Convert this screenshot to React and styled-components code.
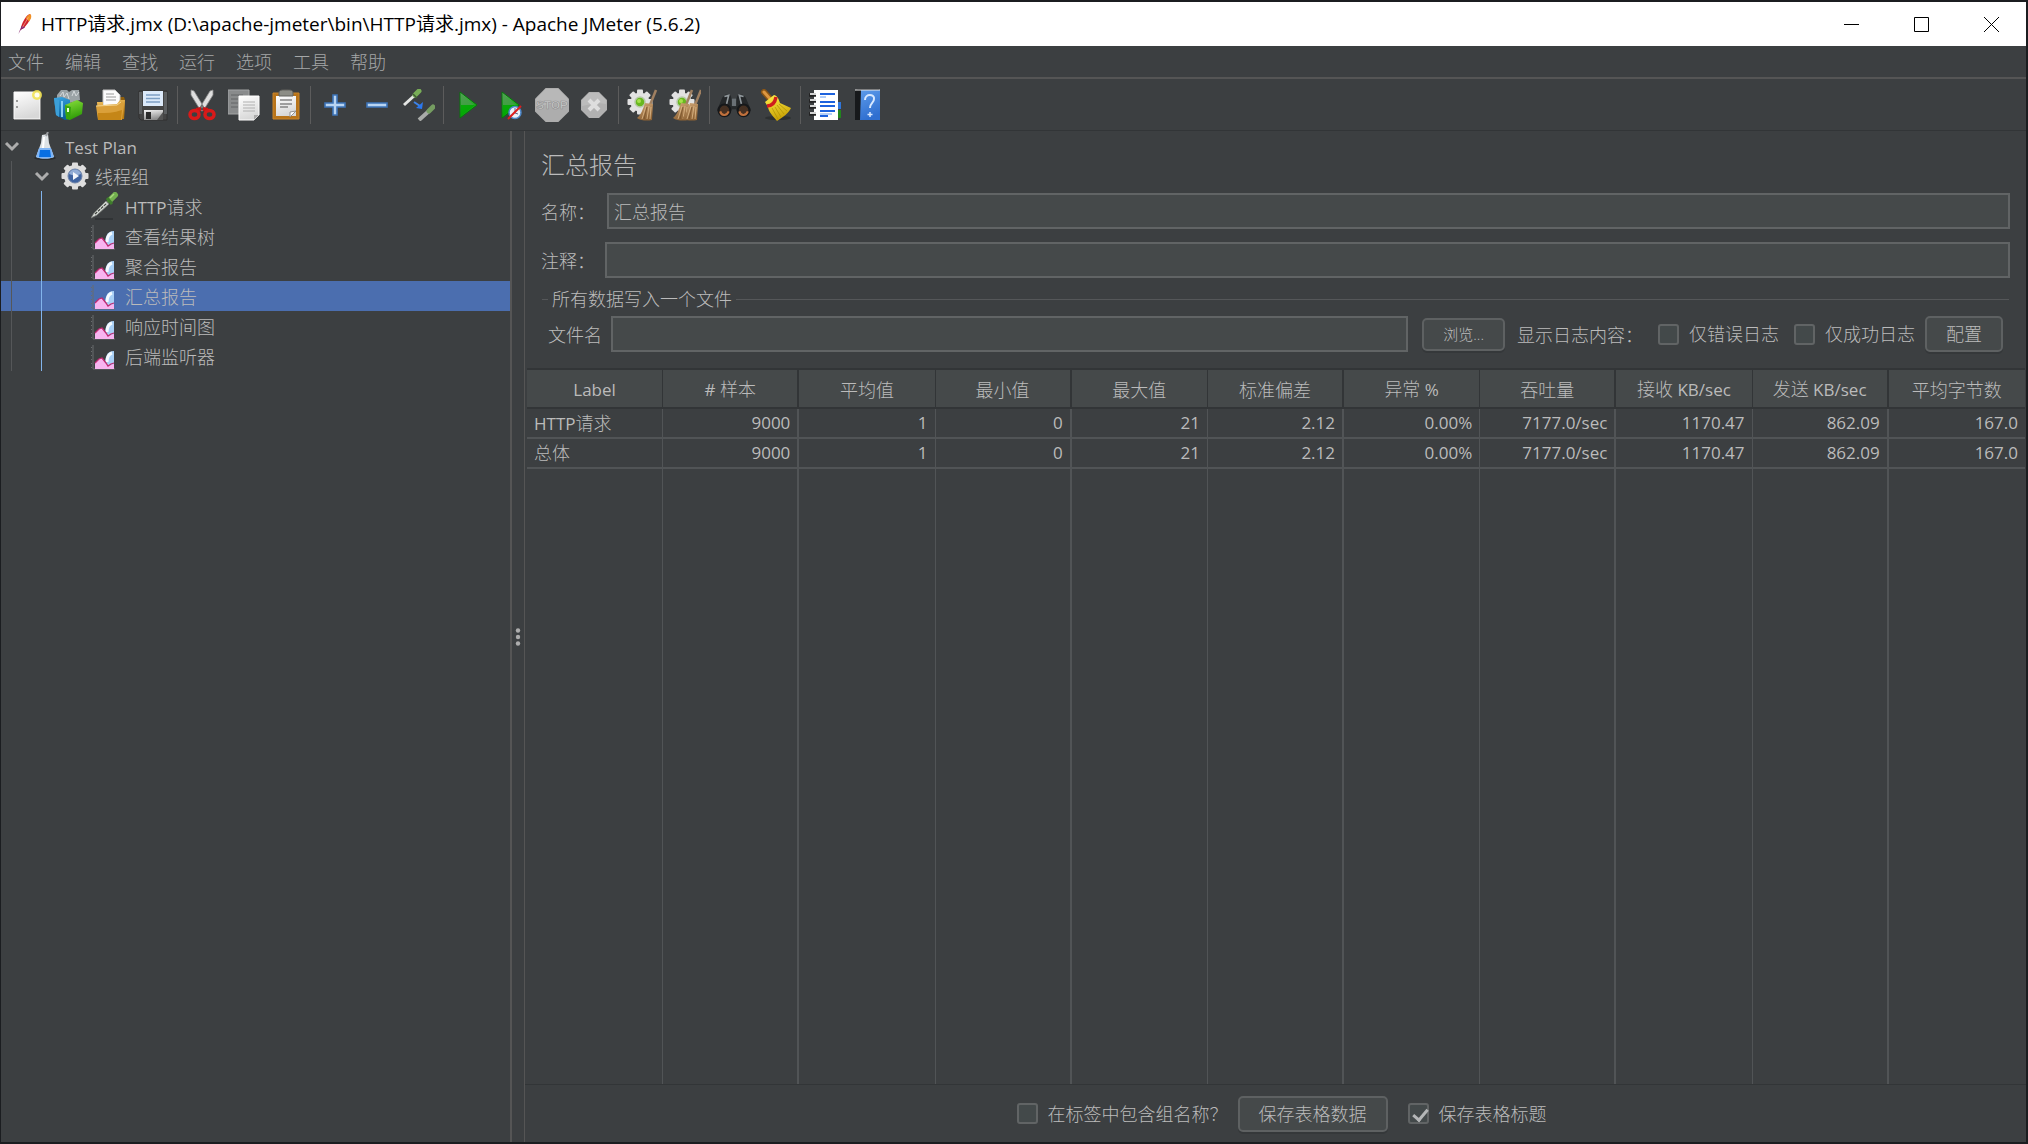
import { Fragment, useState } from 'react';
import styled, { createGlobalStyle } from 'styled-components';

const GlobalStyle = createGlobalStyle`
  * {
    box-sizing: border-box;
  }

  body {
    margin: 0;
    background-color: #1b1d20;
    color: #bbb;
    font-family: 'Open Sans', 'Noto Sans CJK SC', sans-serif;
    font-size: 18px;
    font-weight: 300;
    line-height: 24px;
  }

  button,
  input {
    font: inherit;
    color: inherit;
  }
`;

const StWindow = styled.div`
  height: 100vh;
  padding: 2px 2px 2px 1px;
  display: flex;
  flex-direction: column;
`;

const StTitleBar = styled.header`
  flex: 0 0 44px;
  padding-left: 14px;
  display: flex;
  align-items: center;
  gap: 6px;
  background-color: #fff;
  color: #000;
`;

const StTitle = styled.h1`
  flex: 1;
  margin: 0;
  font-size: 19px;
  font-weight: 400;
  white-space: nowrap;
`;

const StWindowButtons = styled.div`
  display: flex;
`;

const StWindowButton = styled.button`
  width: 70px;
  height: 44px;
  padding: 0;
  border: 0;
  background: none;
  display: flex;
  align-items: center;
  justify-content: center;
`;

const StMenuBar = styled.nav`
  flex: 0 0 33px;
  padding-left: 7px;
  display: flex;
  align-items: center;
  gap: 21px;
  border-bottom: 2px solid #555;
  background-color: #3c3f41;
`;

const StMenuButton = styled.button`
  padding: 0;
  border: 0;
  background: none;
  color: #a5a7a8;
`;

const StToolbar = styled.div`
  flex: 0 0 52px;
  padding-left: 5px;
  display: flex;
  align-items: center;
  border-bottom: 1px solid #323537;
  background-color: #3c3f41;
`;

const StToolButton = styled.button`
  width: 42px;
  height: 42px;
  padding: 0;
  border: 0;
  background: none;
  display: flex;
  align-items: center;
  justify-content: center;
`;

const StToolSeparator = styled.div`
  width: 7px;
  height: 38px;
  display: flex;
  justify-content: center;

  &::before {
    content: '';
    width: 1px;
    background-color: #5c5c5c;
  }
`;

const StBody = styled.main`
  flex: 1;
  min-height: 0;
  display: flex;
  background-color: #3c3f41;
`;

const StTree = styled.ul`
  flex: 0 0 509px;
  margin: 0;
  padding: 0;
  list-style: none;
`;

const StTreeRow = styled.li`
  height: 30px;
  display: flex;
  align-items: center;
  gap: 6px;
  background-color: ${({ $selected }) => ($selected ? '#4b6eaf' : 'transparent')};
  white-space: nowrap;
`;

const StTreeIndent = styled.span`
  margin-right: -6px;
  display: flex;
`;

const StTreeCell = styled.span`
  width: 30px;
  height: 30px;
  padding-left: 3px;
  display: flex;
  align-items: center;
`;

const StTreeGuide = styled.span`
  width: 30px;
  height: 30px;
  padding-left: 10px;

  &::before {
    content: '';
    display: block;
    width: 1px;
    height: 30px;
    background-color: ${({ $active }) => ($active ? '#82b4ec' : '#555759')};
  }
`;

const StTreeText = styled.span`
  padding-top: 2px;
`;

const StSplitter = styled.div`
  flex: 0 0 15px;
  border-left: 2px solid #555;
  border-right: 1px solid #555;
  display: flex;
  align-items: center;
  justify-content: center;
`;

const StPanel = styled.section`
  flex: 1;
  min-width: 0;
  padding-top: 16px;
  display: flex;
  flex-direction: column;
`;

const StPanelTitle = styled.h2`
  margin: 0 0 10px;
  padding: 0 16px;
  font-size: 24px;
  font-weight: 300;
  line-height: 36px;
`;

const StField = styled.div`
  margin-bottom: ${({ $last }) => ($last ? '10px' : '13px')};
  padding: 0 16px;
  display: flex;
  align-items: center;
`;

const StLabel = styled.label`
  flex: 0 0 auto;
  width: ${({ $width }) => $width || 'auto'};
  padding-top: 2px;
  white-space: nowrap;
`;

const StInput = styled.input`
  flex: 1;
  min-width: 0;
  height: 36px;
  padding: 0 5px;
  border: 2px solid #616465;
  border-radius: 0;
  background-color: #45494a;
  outline: none;
`;

const StFieldset = styled.fieldset`
  min-width: 0;
  margin: 0 17px 16px;
  padding: 6px 6px 0;
  border: 0 solid #555759;
  border-top-width: 1px;
`;

const StLegend = styled.legend`
  padding: 0 4px;
  line-height: 22px;
`;

const StFileRow = styled.div`
  display: flex;
  align-items: center;
`;

const StButton = styled.button`
  height: ${({ $small }) => ($small ? '33px' : '36px')};
  padding: 0 19px;
  border: 2px solid #5e6162;
  border-radius: 5px;
  background-color: #45494a;
  box-shadow: 0 2px 0 #35383a;
  font-size: ${({ $small }) => ($small ? '15px' : '18px')};
  line-height: 28px;
  white-space: nowrap;
`;

const StBrowse = styled.div`
  margin: 0 12px 0 14px;
`;

const StCheck = styled.label`
  margin-right: ${({ $gap }) => $gap || '0'};
  display: flex;
  align-items: center;
  gap: 10px;
  white-space: nowrap;
`;

const StCheckbox = styled.input`
  appearance: none;
  position: relative;
  width: 21px;
  height: 21px;
  margin: 0;
  border: 2px solid #616465;
  border-radius: 3px;
  background-color: #43494a;

  &:checked::after {
    content: '';
    position: absolute;
    left: 6px;
    top: 1px;
    width: 6px;
    height: 12px;
    border: solid #b4b6b7;
    border-width: 0 3px 3px 0;
    transform: rotate(40deg);
  }
`;

const StTableArea = styled.div`
  flex: 1;
  min-height: 0;
  padding: 0 1px 0 2px;
  border-bottom: 1px solid #323537;
`;

const StTable = styled.table`
  width: 100%;
  height: 100%;
  table-layout: fixed;
  border-collapse: separate;
  border-spacing: 0;

  th,
  td {
    padding: 0 7px;
    border: 0 solid #515456;
    border-right-width: 1px;
    white-space: nowrap;
  }

  th:nth-child(even),
  td:nth-child(even) {
    border-right-width: 2px;
  }

  th:last-child,
  td:last-child {
    border-right-width: 0;
  }

  th {
    height: 41px;
    padding-top: 2px;
    border-color: #323537;
    border-top-width: 2px;
    border-bottom-width: 2px;
    background-color: #45494a;
    font-weight: 300;
  }
`;

const StDataRow = styled.tr`
  height: 30px;

  td {
    height: 30px;
    border-bottom-width: 2px;
    font-size: 17px;
    font-weight: 400;
    text-align: right;
  }

  td:first-child {
    font-size: 18px;
    font-weight: 300;
    text-align: left;
  }
`;

const StLatin = styled.span`
  font-size: 17px;
  font-weight: 400;
`;

const StFooter = styled.footer`
  flex: 0 0 57px;
  padding-left: 12px;
  display: flex;
  align-items: center;
  justify-content: center;

  > button {
    margin-right: 20px;
  }
`;

const StDefs = styled.svg`
  position: absolute;
  width: 0;
  height: 0;
`;

function Svg({ size = 32, box = 32, children }) {
  return (
    <svg width={size} height={size} viewBox={`0 0 ${box} ${box}`} fill="none" aria-hidden="true">
      {children}
    </svg>
  );
}

const gradients = {
  gPaper: ['#ffffff', '#d8d8d8'],
  gFolder: ['#f0c060', '#b87a10'],
  gGreen: ['#8be03c', '#2f9c08'],
  gBlue: ['#3aa7e4', '#0b5f9e'],
  gPlay: ['#5fae62', '#00a800'],
  gSteel: ['#f4f4f4', '#8d8d8d'],
  gBook: ['#5d9bea', '#2f6fd0'],
  gStraw: ['#d2a878', '#8d6234'],
  gBrush: ['#fff04a', '#c9a205'],
};

function Gradients() {
  return (
    <StDefs aria-hidden="true">
      <defs>
        {Object.entries(gradients).map(([id, [from, to]]) => (
          <linearGradient key={id} id={id} x1="0" y1="0" x2="0.3" y2="1">
            <stop offset="0" stopColor={from} />
            <stop offset="1" stopColor={to} />
          </linearGradient>
        ))}
      </defs>
    </StDefs>
  );
}

// eight-toothed wheel, drawn round the origin
const GearShape = ({ tooth, body, fill }) => (
  <g fill={fill}>
    {[0, 45, 90, 135].map((angle) => (
      <rect key={angle} x="-3" y={-tooth} width="6" height={tooth * 2} rx="1" transform={`rotate(${angle})`} />
    ))}
    <circle r={body} />
  </g>
);

const FeatherIcon = () => (
  <Svg size={20} box={24}>
    <path d="M18 0c3 3-2 11-5 14-2 3-4 3-6 5 0-4 2-9 4-12 2-4 4-6 7-7Z" fill="#d0232c" />
    <path d="M18 0c3 2 1 6-1 9l-4-4c1-2 3-4 5-5Z" fill="#f19122" />
    <path d="m8 14 4 2c-2 2-4 2-5 3l-3 5 2-5Z" fill="#86256f" />
    <path d="m16 4-7 12" stroke="#f7b7a0" strokeWidth="0.8" />
  </Svg>
);

const NewIcon = () => (
  <Svg>
    <path d="M3 3h26v27H3Z" fill="url(#gPaper)" stroke="#fafafa" />
    <path d="M3 30.500h26.500V8" stroke="#8e8e8e" />
    <path d="M5 12h2M5 18h2" stroke="#999" strokeWidth="2" />
    <circle cx="26" cy="6" r="5" fill="#f2e34f" opacity="0.85" />
    <circle cx="26" cy="6" r="2.500" fill="#fffef0" />
  </Svg>
);

const TemplatesIcon = () => (
  <Svg>
    <path d="m4 6 4-5h6l2 2 3-2h7l1 10-14 4L4 9Z" fill="#9ba3a6" />
    <path d="m7 7 3-4 1 5 3-4 2 6M19 7l2-5 2 5 3-4" stroke="#d4d9db" />
    <path d="m1 9 8-1 8 3v19l-5 1-9-5Z" fill="url(#gBlue)" />
    <path d="m1 9 5 2v17l-3-2Z" fill="#3c9fd8" />
    <path d="M9 12v16" stroke="#86cdf0" strokeWidth="2" />
    <path d="m12 16 12-5 6 3-1 11-12 6-4-1Z" fill="url(#gGreen)" />
    <path d="m12 16 6 2-1 13-4-3Z" fill="#37a50e" />
    <path d="M15 19v4" stroke="#e9ffd8" strokeWidth="2" />
  </Svg>
);

const OpenIcon = () => (
  <Svg>
    <path d="M24 8h5l1 3-1 19H8Z" fill="#8f5f0c" />
    <path d="M8 1h12l5 5v12H8Z" fill="#fbfbfb" stroke="#c4c4c4" />
    <path d="M11 5h8M11 8h10M11 11h10" stroke="#999" />
    <path d="M2 13h6v3l14-1 3-4h5l-1 19H3Z" fill="url(#gFolder)" />
    <path d="m1 17 21-1 4-3 3 1-2 17H3Z" fill="#daa03a" />
    <path d="m1 17 21-1 4-3" stroke="#f5d48c" />
    <path d="M3 24c8 0 16 0 24-3l-1 10H3Z" fill="#c58617" />
  </Svg>
);

const SaveIcon = () => (
  <Svg>
    <path d="M2 2h28v29H4l-2-2Z" fill="#444" stroke="#303030" />
    <path d="M2 3h3v22H2ZM27 3h3v22h-3Z" fill="#5c5f61" />
    <path d="M6 2h20v15H6Z" fill="#dceafa" />
    <path d="M9 6h14M9 9.500h14M9 13h14" stroke="#7d9fc4" strokeWidth="1.300" />
    <path d="M7 21h19v10H7Z" fill="url(#gSteel)" />
    <path d="M9 23h5v7H9Z" fill="#2b2b2b" />
    <path d="m20 31 6-8v8Z" fill="#555" />
  </Svg>
);

const CutIcon = () => (
  <Svg>
    <path d="M5 1 8 2l11 18-4 2L5 6ZM27 1l-3 1-11 18 4 2L27 6Z" fill="#dfdfdf" stroke="#8b8b8b" strokeWidth="0.800" />
    <circle cx="16" cy="18" r="1.500" fill="#777" />
    <path d="m15 20-5 1M17 20l5 1" stroke="#cf1414" strokeWidth="4" />
    <ellipse cx="8.500" cy="25.500" rx="4.500" ry="4" stroke="#d91a1a" strokeWidth="3.500" />
    <ellipse cx="23.500" cy="25.500" rx="4.500" ry="4" stroke="#d91a1a" strokeWidth="3.500" />
  </Svg>
);

const CopyIcon = () => (
  <Svg>
    <path d="M0 1h21v24H0Z" fill="#898b8c" stroke="#a2a4a5" />
    <path d="M3 6h12M3 10h7M3 14h7M3 18h7" stroke="#626567" />
    <path d="M11 7h20v19l-5 5H11Z" fill="url(#gPaper)" stroke="#fff" />
    <path d="M15 13h12M15 16h12M15 19h12M15 22h12" stroke="#b0b0b0" />
    <path d="M26 31v-5h5Z" fill="#aaa" />
  </Svg>
);

const PasteIcon = () => (
  <Svg>
    <path d="M3 4h26v26H3Z" fill="#b8741a" stroke="#c98428" />
    <path d="M6 7h20v20H6Z" fill="url(#gPaper)" />
    <path d="M9 4c0-3 3-3 5-3h4c2 0 5 0 5 3v3H9Z" fill="#8c8d86" stroke="#62635e" />
    <path d="M10 11h12M10 15h12M10 18h8" stroke="#858585" strokeWidth="1.300" />
    <path d="M20 28v-5l6-1Z" fill="#fff" stroke="#929292" />
  </Svg>
);

const PlusIcon = () => (
  <Svg>
    <path d="M14 6h4v8h8v4h-8v8h-4v-8H6v-4h8Z" fill="#b9d4f1" stroke="#3d74b8" strokeWidth="1.600" />
  </Svg>
);

const MinusIcon = () => (
  <Svg>
    <path d="M6 14h20v4H6Z" fill="#b9d4f1" stroke="#3d74b8" strokeWidth="1.600" />
  </Svg>
);

const ToggleIcon = () => (
  <Svg>
    <path d="m1 16 11-10" stroke="#e4e6e4" strokeWidth="3" />
    <path d="m12 6 4-4" stroke="#78ad57" strokeWidth="5" strokeLinecap="round" />
    <path d="m10 5 4 4" stroke="#3e5e32" strokeWidth="1.500" />
    <path d="m11 13 6 4" stroke="#3d83e8" strokeWidth="2" />
    <path d="m20 13-1 7-6-1Z" fill="#2b78ef" />
    <path d="m16 31 10-9" stroke="#a9aba9" strokeWidth="4" />
    <path d="m26 22 4-4" stroke="#759d61" strokeWidth="5" strokeLinecap="round" />
  </Svg>
);

const PlayShape = () => (
  <>
    <path d="m8 3 17 13L8 29Z" fill="url(#gPlay)" stroke="#07770b" />
    <path d="M9 16h14L9 27Z" fill="#00a900" opacity="0.800" />
    <path d="m9 5 13 11H9Z" fill="#4a9a4d" opacity="0.700" />
  </>
);

const PlayIcon = () => (
  <Svg>
    <PlayShape />
  </Svg>
);

const PlayNoPauseIcon = () => (
  <Svg>
    <PlayShape />
    <circle cx="21" cy="23.500" r="6" fill="#e9f1fa" stroke="#4d87c9" strokeWidth="1.500" />
    <path d="M21 19v5l3 1" stroke="#668" />
    <path d="m14 30 13-13" stroke="#dc1f1f" strokeWidth="2" />
  </Svg>
);

const StopIcon = () => (
  <Svg size={34}>
    <path d="M10 0h12l10 10v12L22 32H10L0 22V10Z" fill="#adadad" />
    <path d="M10 1h12l9 9v5c-8-2-18 0-30 3v-8Z" fill="#b8b8b8" />
    <text x="16" y="20" fill="#d0d0d0" stroke="#8f8f8f" strokeWidth="0.600" fontSize="11" fontWeight="700" fontFamily="Liberation Sans, sans-serif" textAnchor="middle">
      STOP
    </text>
  </Svg>
);

const ShutdownIcon = () => (
  <Svg>
    <path d="M11 3h10l8 8v10l-8 8H11l-8-8V11Z" fill="#b1b1b1" />
    <path d="M11 4h10l7 7v4c-8-2-15 0-24 2v-6Z" fill="#bcbcbc" />
    <path d="m11 11 10 10M21 11 11 21" stroke="#dedede" strokeWidth="4" />
  </Svg>
);

const WhiteGear = () => (
  <g transform="translate(13 13)">
    <GearShape tooth={12.5} body={9.5} fill="#e2e2e2" />
    <circle r="5" fill="#69b820" stroke="#b9c9ab" strokeWidth="1.500" />
    <circle cx="-1" cy="-1" r="2" fill="#a6e04c" />
  </g>
);

const SmallBroom = ({ shift = 0 }) => (
  <g transform={`translate(${shift} 0)`}>
    <path d="m29 1-6 15" stroke="#a08061" strokeWidth="2.500" />
    <path d="m18 14 8 1-1 16c-4 1-11 1-15-2 4-3 6-9 8-15Z" fill="url(#gStraw)" />
    <path d="m19 17-4 13M22 17l-2 13M24 18l-1 12" stroke="#e0bb8c" strokeWidth="0.800" />
    <path d="m20 18-3 12" stroke="#765029" strokeWidth="0.800" />
  </g>
);

const ClearIcon = () => (
  <Svg>
    <WhiteGear />
    <SmallBroom />
  </Svg>
);

const ClearAllIcon = () => (
  <Svg>
    <WhiteGear />
    <SmallBroom shift={-6} />
    <SmallBroom shift={3} />
  </Svg>
);

const BinocularsIcon = () => (
  <Svg size={34}>
    <path d="m8 6 5 1 1 5h4l1-5 5-1 3 3 5 12-4 5h-7l-3-6h-4l-3 6H4l-4-5L5 9Z" fill="#25282a" />
    <path d="m7 8 4-1-2 8M25 8l-4-1 2 8" stroke="#91989c" strokeWidth="1.500" />
    <circle cx="7" cy="21" r="5.500" fill="#453022" stroke="#16181a" strokeWidth="2" />
    <circle cx="25" cy="21" r="5.500" fill="#453022" stroke="#16181a" strokeWidth="2" />
    <path d="M3 22c1 4 6 5 8 0M21 22c1 4 6 5 8 0" stroke="#c0713d" strokeWidth="2" />
    <path d="M14 10h4v7h-4Z" fill="#697075" />
  </Svg>
);

const BroomIcon = () => (
  <Svg>
    <ellipse cx="18" cy="29" rx="13" ry="2" fill="#2d3031" />
    <path d="m4 3 8 9" stroke="#8a5515" strokeWidth="6" strokeLinecap="round" />
    <path d="m4 3 7 8" stroke="#dc9640" strokeWidth="3" strokeLinecap="round" />
    <path d="m5 13 9-7c4 1 5 5 6 8l11 5c-2 5-8 9-14 13-3-4-8-8-9-14Z" fill="url(#gBrush)" />
    <path d="m12 19 6 11M15 18l6 10M17 16l7 9M19 15l8 7" stroke="#b39606" strokeWidth="0.800" />
    <path d="M7 17c5 0 8-3 9-9" stroke="#cf1d1d" strokeWidth="3.500" />
  </Svg>
);

const ListIcon = () => (
  <Svg>
    <path d="M29 13h3v7h-3Z" fill="#2f76db" />
    <path d="M29 21h3v8h-3Z" fill="#21851d" />
    <path d="M5 1h24v30H5Z" fill="#fff" />
    <path d="M11 5h15M11 13h15M11 17h15M11 22h15M11 27h8" stroke="#1d62dd" strokeWidth="2" />
    <path d="M11 8h6M11 25h12" stroke="#6ba0f2" />
    <path d="M0 6h7M0 12h7M0 18h7M0 25h7" stroke="#222" strokeWidth="3.500" />
    <path d="M1 5h6M1 11h6M1 17h6M1 24h6" stroke="#d4d4d4" strokeWidth="2" />
  </Svg>
);

const HelpIcon = () => (
  <Svg>
    <path d="M4 2 7 0h21v31H4Z" fill="#17191b" />
    <path d="M10 1h19v30H9Z" fill="url(#gBook)" />
    <path d="M4 1h25" stroke="#e8e8e8" />
    <path d="M14 11c0-7 10-6 9-1 0 4-4 4-4 9" stroke="#d7e8ff" strokeWidth="2" />
    <path d="M19 23v5M16.500 25.500h5" stroke="#d7e8ff" strokeWidth="1.500" />
  </Svg>
);

const FlaskIcon = () => (
  <Svg size={28} box={28}>
    <ellipse cx="14" cy="26" rx="11" ry="2" fill="#292c2e" />
    <path d="m11 3 6-1 1 9 5 14c-5 2-13 2-18 0l5-14Z" fill="#dde2e5" />
    <path d="M8 16h12l3 9c-5 2-13 2-18 0Z" fill="#7fb5f5" />
    <path d="M9 18h10l1 7H8Z" fill="#086fe2" />
    <path d="m13 5-1 11" stroke="#fff" strokeWidth="2" />
    <path d="m15 4 2-4" stroke="#9a9da0" strokeWidth="2" />
  </Svg>
);

const GearIcon = () => (
  <Svg size={28} box={28}>
    <g transform="translate(14 14)">
      <GearShape tooth={13.5} body={11} fill="#dedede" />
      <circle r="7" fill="#3f64a1" stroke="#6f83a8" />
      <path d="M-6-2c1-6 11-6 12 0L0 0Z" fill="#92add6" />
      <path d="m-2-4 6 4-6 4Z" fill="#f4f7fb" />
    </g>
  </Svg>
);

const SamplerIcon = () => (
  <Svg size={28} box={28}>
    <path d="M4 27h18" stroke="#2d3032" strokeWidth="1.500" />
    <path d="m0 26 3-5L15 9l3 3L6 23Z" fill="#d8dcd8" stroke="#777b77" strokeWidth="0.800" />
    <path d="m4 22 12-11" stroke="#40443f" strokeWidth="1.200" strokeDasharray="3 1" />
    <path d="m19 8 5-5" stroke="#73b04f" strokeWidth="6" strokeLinecap="round" />
    <path d="m16 6 5 6" stroke="#3f7c2c" strokeWidth="3" />
    <path d="m19 6 4-4" stroke="#a9d87d" strokeWidth="1.500" />
  </Svg>
);

const ReportIcon = () => (
  <Svg size={28} box={28}>
    <path d="M2 3v24h22" stroke="#696c6e" />
    <path d="M0.500 5v22" stroke="#696c6e" strokeDasharray="1 3" />
    <path d="M14 23c0-8 2-14 9-14v18h-8Z" fill="#a9d0f6" />
    <path d="M16 20c0-5 2-8 5-9" stroke="#f5fbff" strokeWidth="3" />
    <path d="M4 27v-6l4-4 3-1 4 5 2 3 3-1 3-1v5Z" fill="#f8b4f0" />
    <path d="m4 21 4-4 3-1 4 5 2 3 3-2 3-1" stroke="#c02a72" strokeWidth="1.300" />
  </Svg>
);

const ChevronIcon = () => (
  <Svg size={16} box={16}>
    <path d="m2 5 6 6 6-6" stroke="#adadad" strokeWidth="3" />
  </Svg>
);

const menus = ['文件', '编辑', '查找', '运行', '选项', '工具', '帮助'];

const toolGroups = [
  [['New', NewIcon], ['Templates', TemplatesIcon], ['Open', OpenIcon], ['Save', SaveIcon]],
  [['Cut', CutIcon], ['Copy', CopyIcon], ['Paste', PasteIcon]],
  [['Expand', PlusIcon], ['Collapse', MinusIcon], ['Toggle', ToggleIcon]],
  [['Start', PlayIcon], ['Start no pauses', PlayNoPauseIcon], ['Stop', StopIcon], ['Shutdown', ShutdownIcon]],
  [['Clear', ClearIcon], ['Clear all', ClearAllIcon]],
  [['Search', BinocularsIcon], ['Reset search', BroomIcon]],
  [['Function helper', ListIcon], ['Help', HelpIcon]],
];

const treeNodes = [
  { latin: 'Test Plan', depth: 0, Icon: FlaskIcon },
  { text: '线程组', depth: 1, Icon: GearIcon },
  { latin: 'HTTP', text: '请求', depth: 2, Icon: SamplerIcon },
  { text: '查看结果树', depth: 2, Icon: ReportIcon },
  { text: '聚合报告', depth: 2, Icon: ReportIcon },
  { text: '汇总报告', depth: 2, Icon: ReportIcon, selected: true },
  { text: '响应时间图', depth: 2, Icon: ReportIcon },
  { text: '后端监听器', depth: 2, Icon: ReportIcon },
];

const columns = [
  ['', 'Label'],
  ['', '# ', '样本'],
  ['平均值'],
  ['最小值'],
  ['最大值'],
  ['标准偏差'],
  ['异常', ' %'],
  ['吞吐量'],
  ['接收', ' KB/sec'],
  ['发送', ' KB/sec'],
  ['平均字节数'],
];

const values = ['9000', '1', '0', '21', '2.12', '0.00%', '7177.0/sec', '1170.47', '862.09', '167.0'];

function TreeNode({ node }) {
  const { latin, text, depth, Icon, selected } = node;
  return (
    <StTreeRow $selected={selected}>
      <StTreeIndent>
        {depth > 0 && <StTreeGuide />}
        {depth > 1 && <StTreeGuide $active />}
        <StTreeCell>{depth < 2 && <ChevronIcon />}</StTreeCell>
      </StTreeIndent>
      <Icon />
      <StTreeText>
        {latin && <StLatin>{latin}</StLatin>}
        {text}
      </StTreeText>
    </StTreeRow>
  );
}

function ResultTable() {
  return (
    <StTableArea>
      <StTable>
        <thead>
          <tr>
            {columns.map(([before, latin, after], i) => (
              <th key={i} scope="col">
                {before}
                {latin && <StLatin>{latin}</StLatin>}
                {after}
              </th>
            ))}
          </tr>
        </thead>
        <tbody>
          <StDataRow>
            <td>
              <StLatin>HTTP</StLatin>请求
            </td>
            {values.map((value, i) => (
              <td key={i}>{value}</td>
            ))}
          </StDataRow>
          <StDataRow>
            <td>总体</td>
            {values.map((value, i) => (
              <td key={i}>{value}</td>
            ))}
          </StDataRow>
          <tr aria-hidden="true">
            {columns.map((_, i) => (
              <td key={i} />
            ))}
          </tr>
        </tbody>
      </StTable>
    </StTableArea>
  );
}

function SummaryReport() {
  const [name, setName] = useState('汇总报告');

  return (
    <StPanel>
      <StPanelTitle>汇总报告</StPanelTitle>
      <StField>
        <StLabel htmlFor="name" $width="66px">名称：</StLabel>
        <StInput id="name" value={name} onChange={(e) => setName(e.target.value)} />
      </StField>
      <StField $last>
        <StLabel htmlFor="comment" $width="64px">注释：</StLabel>
        <StInput id="comment" />
      </StField>
      <StFieldset>
        <StLegend>所有数据写入一个文件</StLegend>
        <StFileRow>
          <StLabel htmlFor="filename" $width="63px">文件名</StLabel>
          <StInput id="filename" />
          <StBrowse>
            <StButton type="button" $small>浏览...</StButton>
          </StBrowse>
          <StLabel as="span" $width="141px">显示日志内容：</StLabel>
          <StCheck $gap="15px">
            <StCheckbox type="checkbox" />
            仅错误日志
          </StCheck>
          <StCheck $gap="10px">
            <StCheckbox type="checkbox" />
            仅成功日志
          </StCheck>
          <StButton type="button">配置</StButton>
        </StFileRow>
      </StFieldset>
      <ResultTable />
      <StFooter>
        <StCheck $gap="10px">
          <StCheckbox type="checkbox" />
          在标签中包含组名称？
        </StCheck>
        <StButton type="button">保存表格数据</StButton>
        <StCheck>
          <StCheckbox type="checkbox" defaultChecked />
          保存表格标题
        </StCheck>
      </StFooter>
    </StPanel>
  );
}

function App() {
  return (
    <StWindow>
      <GlobalStyle />
      <Gradients />
      <StTitleBar>
        <FeatherIcon />
        <StTitle>HTTP请求.jmx (D:\apache-jmeter\bin\HTTP请求.jmx) - Apache JMeter (5.6.2)</StTitle>
        <StWindowButtons>
          <StWindowButton aria-label="Minimize">
            <Svg size={15} box={15}>
              <path d="M0 7.500h15" stroke="#000" />
            </Svg>
          </StWindowButton>
          <StWindowButton aria-label="Maximize">
            <Svg size={15} box={15}>
              <path d="M0.500 0.500h14v14h-14Z" stroke="#000" />
            </Svg>
          </StWindowButton>
          <StWindowButton aria-label="Close">
            <Svg size={15} box={15}>
              <path d="m0 0 15 15M15 0 0 15" stroke="#000" />
            </Svg>
          </StWindowButton>
        </StWindowButtons>
      </StTitleBar>
      <StMenuBar>
        {menus.map((menu) => (
          <StMenuButton key={menu}>{menu}</StMenuButton>
        ))}
      </StMenuBar>
      <StToolbar>
        {toolGroups.map((group, i) => (
          <Fragment key={i}>
            {i > 0 && <StToolSeparator />}
            {group.map(([label, Icon]) => (
              <StToolButton key={label} aria-label={label}>
                <Icon />
              </StToolButton>
            ))}
          </Fragment>
        ))}
      </StToolbar>
      <StBody>
        <StTree>
          {treeNodes.map((node, i) => (
            <TreeNode key={i} node={node} />
          ))}
        </StTree>
        <StSplitter>
          <svg width="6" height="20" viewBox="0 0 6 20" fill="#adadad" aria-hidden="true">
            <circle cx="3" cy="3.500" r="2.200" />
            <circle cx="3" cy="10" r="2.200" />
            <circle cx="3" cy="16.500" r="2.200" />
          </svg>
        </StSplitter>
        <SummaryReport />
      </StBody>
    </StWindow>
  );
}

export default App;
